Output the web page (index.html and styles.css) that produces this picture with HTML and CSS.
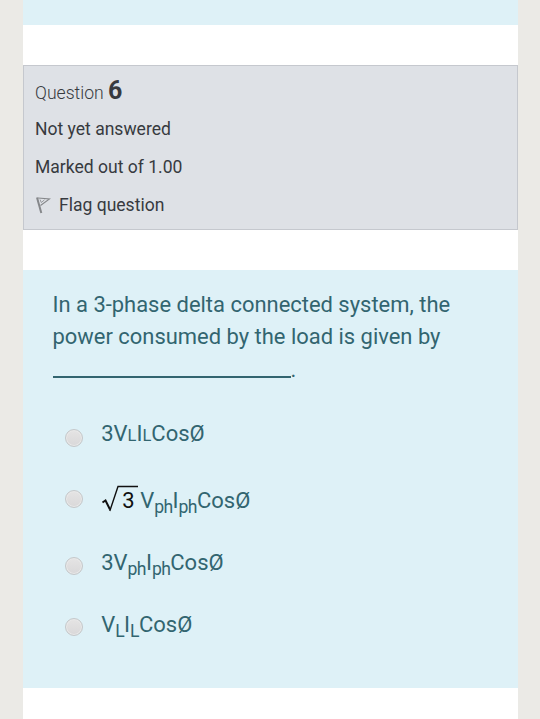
FILE: index.html
```
<!DOCTYPE html>
<html lang="en">
<head>
<meta charset="utf-8">
<title>Quiz</title>
<link rel="stylesheet" href="styles.css">
</head>
<body>
<main class="page">
  <div class="previous"></div>
  <section class="info">
    <h3 class="number">Question <b>6</b></h3>
    <div class="line">Not yet answered</div>
    <div class="line marks">Marked out of 1.00</div>
    <div class="line flag">
      <svg class="flag-icon" width="16" height="18" viewBox="0 0 16 18" fill="none" stroke="#85878a"><path d="M2 1.5L6.3 17" stroke-width="2"/><path d="M3 2L14.5 3L5.5 9.5" stroke-width="1.1"/><path d="M5 3.5L6.3 6.5L9.5 3.8" stroke-width=".8"/></svg>
      <span class="flag-label">Flag question</span>
    </div>
  </section>
  <section class="question">
    <p class="text"><span class="row first">In a 3-phase delta connected system, the</span><span class="row second">power consumed by the load is given by</span><span class="blank"><i class="rule"></i><span class="stop">.</span></span></p>
    <div class="answers">
      <label class="answer a"><i class="radio"></i><span class="formula">3V<small>L</small>I<small>L</small>CosØ</span></label>
      <label class="answer b"><i class="radio"></i><span class="root"><svg class="root-sign" width="38" height="28" viewBox="0 0 38 28" fill="none" stroke="#111"><path d="M1.5 17.5L4.5 15.5L9 24.5" stroke-width="2"/><path d="M8.8 26L17 1.5H37" stroke-width="1.4"/></svg><span class="radicand">3</span></span><span class="formula">V<sub>ph</sub>I<sub>ph</sub>CosØ</span></label>
      <label class="answer c"><i class="radio"></i><span class="formula">3V<sub>ph</sub>I<sub>ph</sub>CosØ</span></label>
      <label class="answer d"><i class="radio"></i><span class="formula">V<sub>L</sub>I<sub>L</sub>CosØ</span></label>
    </div>
  </section>
</main>
</body>
</html>
```
FILE: styles.css
```
* { box-sizing: border-box; }
body { margin: 0; background: #ebeae6; font-family: Roboto, sans-serif; }
.page { width: 495px; height: 719px; margin-left: 23px; background: #fff; overflow: hidden; }
.previous { height: 25px; background: #def1f7; }
.info { height: 165px; margin-top: 40px; padding: 8px 11px 0; border: 1px solid #c5c8ce; background: #dee1e6; color: #373a3f; font-size: 17.55px; }
.number { margin: 0; height: 36px; line-height: 38px; font-size: 17.6px; font-weight: 300; white-space: nowrap; }
.number b { font-size: 25px; font-weight: 700; line-height: 1; }
.line { height: 38px; line-height: 38px; white-space: nowrap; }
.flag { display: flex; align-items: center; }
.flag-icon { margin-right: 8px; }
.question { height: 418px; margin-top: 40px; padding: 18px 30px 0 29.5px; background: #def1f7; color: #326570; }
.text { margin: 0; font-size: 21.95px; line-height: 33px; white-space: nowrap; }
.row { display: block; }
.first { height: 32px; }
.blank { display: flex; align-items: flex-end; height: 32px; }
.rule { width: 238px; height: 2px; margin-bottom: 7px; background: #326570; }
.stop { line-height: 31px; }
.answers { margin-top: 21.5px; }
.answer { display: flex; align-items: center; padding-left: 12px; font-size: 22px; line-height: 30px; white-space: nowrap; }
.a { height: 62px; }
.b { height: 61px; }
.c { height: 72px; }
.d { height: 51px; }
.radio { width: 18px; height: 18px; margin-right: 18.7px; border: 1px solid #c5c8ca; border-radius: 50%; background: linear-gradient(#e5e4e4, #d9d8d9); box-shadow: inset 0 0 0 1px #e9e9e9; }
.formula { padding-bottom: 5px; }
.b .formula { padding: 4px 0 0; }
.formula small { font-size: 16.5px; }
.formula sub { font-size: 17.6px; letter-spacing: -.6px; line-height: 0; vertical-align: -5px; }
.root { display: grid; width: 38px; margin-right: 1px; padding-top: 2px; color: #111; }
.root-sign, .radicand { grid-area: 1 / 1; }
.radicand { padding: 2px 0 0 21px; line-height: 28px; }
```
